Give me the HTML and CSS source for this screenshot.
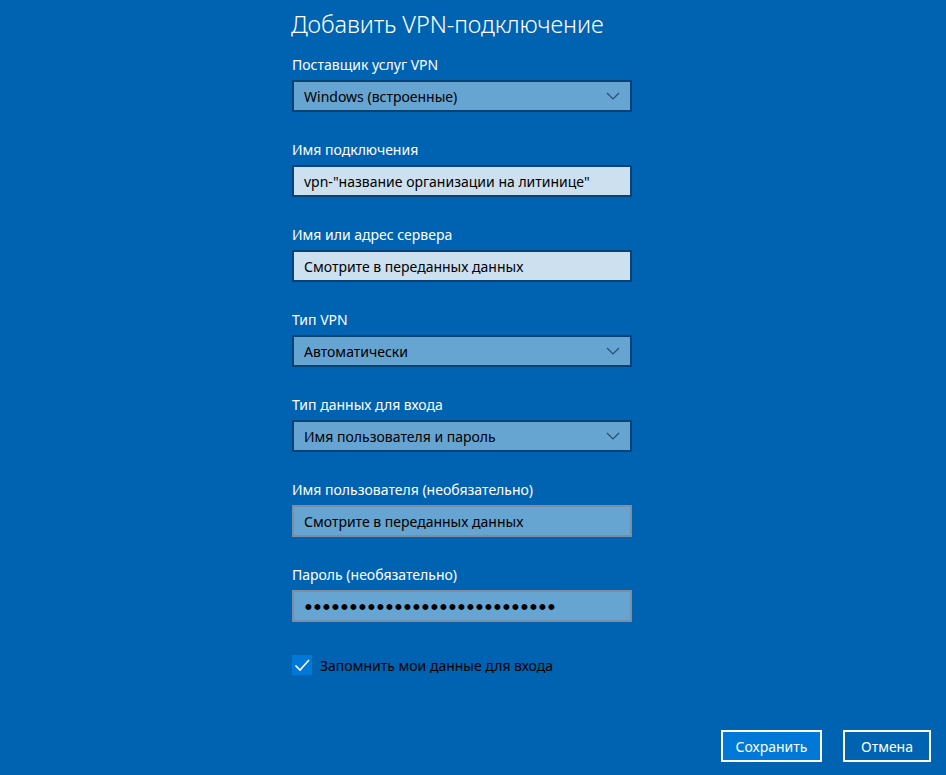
FILE: index.html
```html
<!DOCTYPE html>
<html lang="ru">
<head>
<meta charset="utf-8">
<title>Добавить VPN-подключение</title>
<link rel="stylesheet" href="styles.css">
</head>
<body>
<div class="page">
  <form class="form">
    <h1 class="title">Добавить VPN-подключение</h1>

    <div class="field">
      <div class="label">Поставщик услуг VPN</div>
      <div class="box select"><span>Windows (встроенные)</span><svg class="chev" width="14" height="8" viewBox="0 0 14 8"><path d="M1 1 L7 7 L13 1" fill="none" stroke="#284d70" stroke-width="1.2"/></svg></div>
    </div>

    <div class="field">
      <div class="label">Имя подключения</div>
      <div class="box edit"><span>vpn-"название организации на литинице"</span></div>
    </div>

    <div class="field">
      <div class="label">Имя или адрес сервера</div>
      <div class="box edit"><span>Смотрите в переданных данных</span></div>
    </div>

    <div class="field">
      <div class="label">Тип VPN</div>
      <div class="box select"><span>Автоматически</span><svg class="chev" width="14" height="8" viewBox="0 0 14 8"><path d="M1 1 L7 7 L13 1" fill="none" stroke="#284d70" stroke-width="1.2"/></svg></div>
    </div>

    <div class="field">
      <div class="label">Тип данных для входа</div>
      <div class="box select"><span>Имя пользователя и пароль</span><svg class="chev" width="14" height="8" viewBox="0 0 14 8"><path d="M1 1 L7 7 L13 1" fill="none" stroke="#284d70" stroke-width="1.2"/></svg></div>
    </div>

    <div class="field">
      <div class="label">Имя пользователя (необязательно)</div>
      <div class="box muted"><span>Смотрите в переданных данных</span></div>
    </div>

    <div class="field">
      <div class="label">Пароль (необязательно)</div>
      <div class="box muted"><span class="dots">●●●●●●●●●●●●●●●●●●●●●●●●●●●●</span></div>
    </div>

    <label class="check">
      <span class="checkbox"><svg width="20" height="20" viewBox="0 0 20 20"><path d="M3.5 10.5 L8 15 L17 5" fill="none" stroke="#ffffff" stroke-width="1.6"/></svg></span>
      <span class="check-text">Запомнить мои данные для входа</span>
    </label>
  </form>

  <div class="actions">
    <button type="button" class="btn primary">Сохранить</button>
    <button type="button" class="btn">Отмена</button>
  </div>
</div>
</body>
</html>
```

FILE: styles.css
```css
html, body {
  margin: 0;
  padding: 0;
}
body {
  background: #0063b1;
  color: #ffffff;
  font-family: "Noto Sans", "Open Sans", "DejaVu Sans", sans-serif;
  font-size: 15px;
  width: 946px;
  height: 775px;
  overflow: hidden;
}
.page {
  position: relative;
  height: 775px;
}
.form {
  display: flex;
  flex-direction: column;
  padding-left: 292px;
  padding-top: 8px;
}
.title {
  margin: 0 0 15px -1px;
  font-weight: 300;
  font-size: 23.5px;
  line-height: 32px;
  letter-spacing: -0.1px;
}
.field {
  display: flex;
  flex-direction: column;
  margin-bottom: 28px;
}
.label {
  font-size: 14px;
  line-height: 20px;
  margin-bottom: 5px;
}
.box {
  box-sizing: border-box;
  width: 340px;
  height: 32px;
  border: 2px solid #0b4276;
  display: flex;
  align-items: center;
  justify-content: space-between;
  padding: 0 9px 0 10px;
  color: #000000;
  font-size: 14px;
}
.select {
  background: #66a4d2;
}
.edit {
  background: #cce0f0;
}
.muted {
  background: #66a4d2;
  border-color: #7e8da0;
}
.chev {
  display: block;
  margin-right: 1px;
}
.dots {
  font-family: "DejaVu Sans", sans-serif;
  font-size: 7.8px;
  letter-spacing: 2.2px;
  margin-left: 1px;
}
.check {
  display: flex;
  align-items: center;
  gap: 8px;
  margin-top: 5px;
}
.checkbox {
  width: 20px;
  height: 20px;
  background: #0078d7;
  display: block;
}
.checkbox svg {
  display: block;
}
.check-text {
  color: #000000;
  font-size: 14px;
}
.actions {
  position: absolute;
  right: 15px;
  bottom: 13px;
  display: flex;
  gap: 21px;
}
.btn {
  box-sizing: border-box;
  height: 32px;
  border: 2px solid #ffffff;
  background: #0063b1;
  color: #ffffff;
  font-family: "Noto Sans", "Open Sans", "DejaVu Sans", sans-serif;
  font-size: 14px;
  padding: 0;
  width: 88px;
}
.btn.primary {
  background: #0078d7;
  width: 101px;
}
```
